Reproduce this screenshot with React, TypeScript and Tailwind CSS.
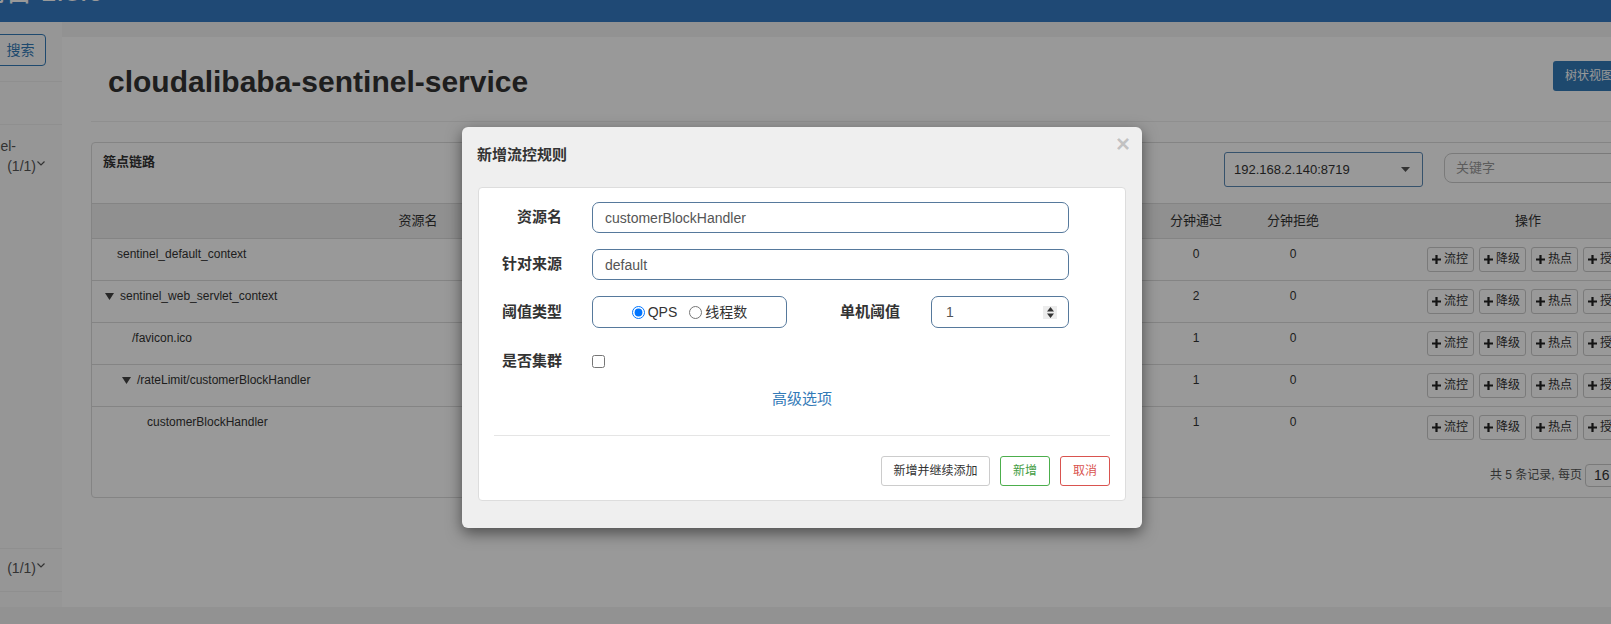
import React from "react";

interface ResourceRow {
  name: string;
  indent: string;
  tree: boolean;
  pass: number;
  block: number;
}

const resources: ResourceRow[] = [
  { name: "sentinel_default_context", indent: "pl-[25px]", tree: false, pass: 0, block: 0 },
  { name: "sentinel_web_servlet_context", indent: "pl-[13px]", tree: true, pass: 2, block: 0 },
  { name: "/favicon.ico", indent: "pl-[40px]", tree: false, pass: 1, block: 0 },
  { name: "/rateLimit/customerBlockHandler", indent: "pl-[30px]", tree: true, pass: 1, block: 0 },
  { name: "customerBlockHandler", indent: "pl-[55px]", tree: false, pass: 1, block: 0 },
];

const actions = ["流控", "降级", "热点", "授权"];

function PlusIcon() {
  return (
    <svg width="9" height="9" viewBox="0 0 9 9">
      <path d="M3.4 0h2.2v3.4H9v2.2H5.6V9H3.4V5.6H0V3.4h3.4z" fill="#222" />
    </svg>
  );
}

function Caret() {
  return (
    <svg width="9" height="5" viewBox="0 0 9 5">
      <path d="M0 0h9L4.5 5z" fill="#555" />
    </svg>
  );
}

function TreeArrow() {
  return (
    <svg width="9" height="7" viewBox="0 0 9 7" className="mr-[6px] mt-[4px]">
      <path d="M0 0h9L4.5 7z" fill="#444" />
    </svg>
  );
}

function Chevron() {
  return (
    <svg width="8" height="5" viewBox="0 0 8 5" className="mb-[6px] ml-[1px] shrink-0">
      <path d="M0.5 0.5L4 4l3.5-3.5" stroke="#555" strokeWidth="1.2" fill="none" />
    </svg>
  );
}

function Sidebar() {
  return (
    <aside className="h-full w-[62px] shrink-0 overflow-hidden bg-[#fbfbfb] text-[14px] text-[#555]">
      <div className="flex h-[60px] justify-end border-b border-[#eee] pr-[16px] pt-[12px]">
        <button className="h-[32px] w-[51px] shrink-0 rounded-r-[4px] border border-[#337ab7] text-[14px] text-[#337ab7]">
          搜索
        </button>
      </div>
      <div className="h-[43px] border-b border-[#eee]" />
      <div className="flex h-[423px] flex-col items-end pt-[11px] leading-[20px]">
        <div className="flex w-full justify-end whitespace-nowrap pr-[46px]">cloudalibaba-sentinel-</div>
        <div className="flex w-full items-center justify-end whitespace-nowrap pr-[17px]">
          <span>service</span>
          <span className="ml-[9px]">(1/1)</span>
          <Chevron />
        </div>
      </div>
      <div className="flex h-[44px] items-center justify-end whitespace-nowrap border-y border-[#eee] pb-[4px] pr-[17px]">
        <span>sentinel-dashboard</span>
        <span className="ml-[9px]">(1/1)</span>
        <Chevron />
      </div>
    </aside>
  );
}

function ResourceTable() {
  return (
    <div className="mt-[20px] w-[1624px] rounded-[4px] border border-[#ddd] bg-white">
      <div className="flex h-[61px] border-b border-[#ddd]">
        <div className="pl-[11px] pt-[10px] text-[13px] font-bold leading-[18px] text-[#333]">簇点链路</div>
        <div className="ml-auto flex items-start pr-[14px] pt-[9px]">
          <div className="flex h-[35px] w-[199px] items-center rounded-[3px] border border-[#5b89b5] pl-[9px] pr-[12px] text-[13px] text-[#333]">
            192.168.2.140:8719
            <span className="ml-auto">
              <Caret />
            </span>
          </div>
          <div className="ml-[21px] mt-[1px] flex h-[30px] w-[256px] items-center rounded-[8px] border border-[#ccc] pl-[11px] text-[13px] text-[#999]">
            关键字
          </div>
        </div>
      </div>

      <div className="grid h-[35px] grid-cols-[652px_101px_101px_101px_101px_96px_98px_372px] items-center border-b border-[#ddd] bg-[#f1f1f1] text-center text-[13px] text-[#333]">
        <div>资源名</div>
        <div>通过QPS</div>
        <div>拒绝QPS</div>
        <div>并发数</div>
        <div>平均RT</div>
        <div>分钟通过</div>
        <div>分钟拒绝</div>
        <div>操作</div>
      </div>

      {resources.map((r, i) => (
        <div
          key={r.name}
          className={
            i === resources.length - 1
              ? "grid h-[42px] grid-cols-[652px_101px_101px_101px_101px_96px_98px_372px] text-[12px] leading-[15px] text-[#333]"
              : "grid h-[42px] grid-cols-[652px_101px_101px_101px_101px_96px_98px_372px] border-b border-[#ddd] text-[12px] leading-[15px] text-[#333]"
          }
        >
          <div className={`flex items-start pt-[8px] ${r.indent}`}>
            {r.tree && <TreeArrow />}
            {r.name}
          </div>
          <div className="pt-[8px] text-center">0</div>
          <div className="pt-[8px] text-center">0</div>
          <div className="pt-[8px] text-center">0</div>
          <div className="pt-[8px] text-center">0</div>
          <div className="pt-[8px] text-center">{r.pass}</div>
          <div className="pt-[8px] text-center">{r.block}</div>
          <div className="flex justify-center gap-[5px] pt-[8px]">
            {actions.map((a) => (
              <button
                key={a}
                className="flex h-[25px] w-[47px] items-center justify-center gap-[3px] rounded-[3px] border border-[#ccc] bg-white text-[12px] text-[#333]"
              >
                <PlusIcon />
                {a}
              </button>
            ))}
          </div>
        </div>
      ))}

      <div className="flex h-[48px] items-center justify-end pr-[14px] pt-[4px] text-[12px] text-[#555]">
        <span>共 5 条记录, 每页</span>
        <div className="ml-[3px] flex h-[23px] w-[55px] items-center rounded-[4px] border border-[#ccc] pl-[8px] text-[14px] text-[#333]">
          16
        </div>
        <span className="ml-[4px]">条</span>
        <div className="ml-[8px] flex h-[23px] w-[36px] items-center justify-center rounded-[4px] border border-[#ddd] text-[#337ab7]">
          1
        </div>
      </div>
    </div>
  );
}

function FlowRuleModal() {
  return (
    <div className="absolute left-[462px] top-[127px] h-[401px] w-[680px] rounded-[6px] bg-[#efefef] shadow-[0_5px_15px_rgba(0,0,0,0.5)]">
      <div className="relative px-[15px] pt-[17px]">
        <h4 className="text-[15px] font-bold leading-[21px] text-[#333]">新增流控规则</h4>
        <span className="absolute right-[12px] top-[5px] text-[24px] font-bold leading-none text-black/20">×</span>
      </div>

      <div className="mx-[16px] mt-[22px] rounded-[4px] border border-[#ddd] bg-white px-[15px] pb-[14px] pt-[14px]">
        <div className="flex h-[31px] items-center">
          <label className="w-[68px] text-right text-[15px] font-bold text-[#333]">资源名</label>
          <input
            readOnly
            value="customerBlockHandler"
            className="ml-[30px] h-[31px] w-[477px] rounded-[7px] border border-[#56799c] px-[12px] text-[14px] text-[#555] outline-none"
          />
        </div>

        <div className="mt-[16px] flex h-[31px] items-center">
          <label className="w-[68px] text-right text-[15px] font-bold text-[#333]">针对来源</label>
          <input
            readOnly
            value="default"
            className="ml-[30px] h-[31px] w-[477px] rounded-[7px] border border-[#56799c] px-[12px] text-[14px] text-[#555] outline-none"
          />
        </div>

        <div className="mt-[16px] flex h-[32px] items-center">
          <label className="w-[68px] text-right text-[15px] font-bold text-[#333]">阈值类型</label>
          <div className="ml-[30px] flex h-[32px] w-[195px] items-center justify-center rounded-[7px] border border-[#56799c] text-[14px] text-[#333]">
            <input type="radio" name="grade" defaultChecked className="m-0 h-[13px] w-[13px]" />
            <span className="ml-[3px]">QPS</span>
            <input type="radio" name="grade" className="m-0 ml-[12px] h-[13px] w-[13px]" />
            <span className="ml-[3px]">线程数</span>
          </div>
          <label className="w-[113px] text-right text-[15px] font-bold text-[#333]">单机阈值</label>
          <div className="ml-[31px] flex h-[32px] w-[138px] items-center rounded-[7px] border border-[#56799c] pl-[14px] pr-[11px] text-[14px] text-[#555]">
            1
            <span className="ml-auto flex h-[13px] w-[14px] items-center justify-center bg-[#ececec]">
              <svg width="7" height="11" viewBox="0 0 7 11">
                <path d="M3.5 0L7 4.5H0zM0 6.5h7L3.5 11z" fill="#333" />
              </svg>
            </span>
          </div>
        </div>

        <div className="mt-[18px] flex h-[31px] items-center">
          <label className="w-[68px] text-right text-[15px] font-bold text-[#333]">是否集群</label>
          <input type="checkbox" className="m-0 ml-[30px] h-[13px] w-[13px]" />
        </div>

        <div className="mt-[11px] text-center text-[15px] leading-[21px] text-[#337ab7]">高级选项</div>

        <div className="mt-[26px] border-t border-[#e5e5e5]" />

        <div className="mt-[20px] flex h-[30px] justify-end gap-[10px] text-[12px]">
          <button className="w-[109px] rounded-[3px] border border-[#ccc] bg-white text-[#333]">新增并继续添加</button>
          <button className="w-[50px] rounded-[3px] border border-[#4cae4c] bg-white text-[#449d44]">新增</button>
          <button className="w-[50px] rounded-[3px] border border-[#d9534f] bg-white text-[#d9534f]">取消</button>
        </div>
      </div>
    </div>
  );
}

export default function App() {
  return (
    <div className="relative h-[624px] w-[1611px] overflow-hidden bg-[#f4f4f4] font-['Liberation_Sans','Noto_Sans_CJK_SC',sans-serif]">
      <header className="h-[22px] overflow-hidden bg-[#347bc3]">
        <div className="-ml-[51px] -mt-[22px] whitespace-nowrap text-[28px] leading-[28px] text-white">控制台 1.8.6</div>
      </header>

      <div className="flex h-[585px]">
        <Sidebar />
        <main className="mt-[15px] h-[570px] w-[1700px] shrink-0 bg-white pl-[29px]">
          <div className="flex h-[85px] w-[1624px] items-start border-b border-[#eee]">
            <h1 className="mt-[27px] pl-[17px] text-[30px] font-bold leading-[36px] text-[#333]">
              cloudalibaba-sentinel-service
            </h1>
            <button className="ml-auto mr-[90px] mt-[24px] h-[30px] w-[72px] rounded-[3px] bg-[#337ab7] text-[12px] text-white">
              树状视图
            </button>
          </div>
          <ResourceTable />
        </main>
      </div>

      <div className="absolute inset-0 bg-black/40" />
      <FlowRuleModal />
    </div>
  );
}
